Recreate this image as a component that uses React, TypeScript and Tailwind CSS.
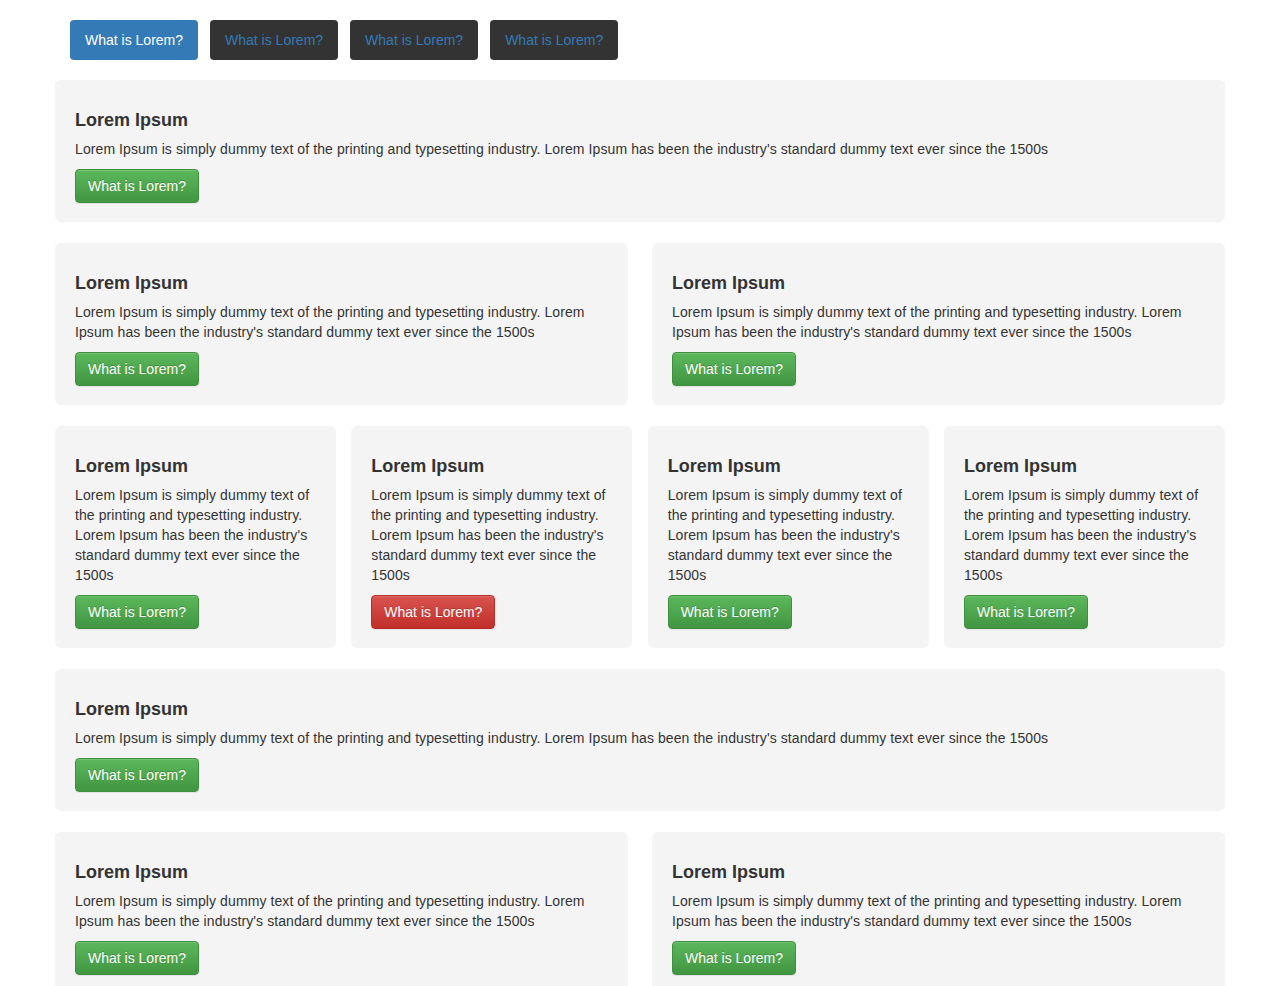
import React from "react";

const body =
  "Lorem Ipsum is simply dummy text of the printing and typesetting industry. Lorem Ipsum has been the industry's standard dummy text ever since the 1500s";

function ActionButton({ danger = false }: { danger?: boolean }) {
  return (
    <button
      className={
        "inline-block rounded-[4px] border px-[12px] py-[6px] text-[14px] leading-[20px] text-white [text-shadow:0_-1px_0_rgba(0,0,0,0.2)] shadow-[inset_0_1px_0_rgba(255,255,255,0.15),0_1px_1px_rgba(0,0,0,0.075)] bg-linear-to-b " +
        (danger
          ? "border-[#b92c28] from-[#d9534f] to-[#c12e2a]"
          : "border-[#3e8f3e] from-[#5cb85c] to-[#419641]")
      }
    >
      What is Lorem?
    </button>
  );
}

function Card({ danger = false }: { danger?: boolean }) {
  return (
    <div className="rounded-[6px] bg-[#f4f4f4] px-[20px] pt-[30px] pb-[19px]">
      <h3 className="text-[18px] font-semibold leading-[20px] text-[#333]">Lorem Ipsum</h3>
      <p className="mt-[9px] text-[14px] leading-[20px] tracking-[0.09px] text-[#333]">{body}</p>
      <div className="mt-[10px]">
        <ActionButton danger={danger} />
      </div>
    </div>
  );
}

export default function App() {
  return (
    <div className="min-h-screen bg-white font-['Liberation_Sans',Arial,sans-serif]">
      <div className="mx-auto w-[1170px] pt-[20px] pb-[40px]">
        <nav className="flex gap-[12px] pl-[15px]">
          <button className="rounded-[4px] bg-[#337ab7] px-[15px] py-[10px] text-[14px] leading-[20px] text-white">
            What is Lorem?
          </button>
          {[0, 1, 2].map((i) => (
            <button
              key={i}
              className="rounded-[4px] bg-[#333] px-[15px] py-[10px] text-[14px] leading-[20px] text-[#337ab7]"
            >
              What is Lorem?
            </button>
          ))}
        </nav>

        <div className="mt-[20px] flex flex-col gap-[21px]">
          <Card />
          <div className="grid grid-cols-2 gap-[24px]">
            <Card />
            <Card />
          </div>
          <div className="grid grid-cols-4 gap-[15.33px]">
            <Card />
            <Card danger />
            <Card />
            <Card />
          </div>
          <Card />
          <div className="grid grid-cols-2 gap-[24px]">
            <Card />
            <Card />
          </div>
        </div>
      </div>
    </div>
  );
}
